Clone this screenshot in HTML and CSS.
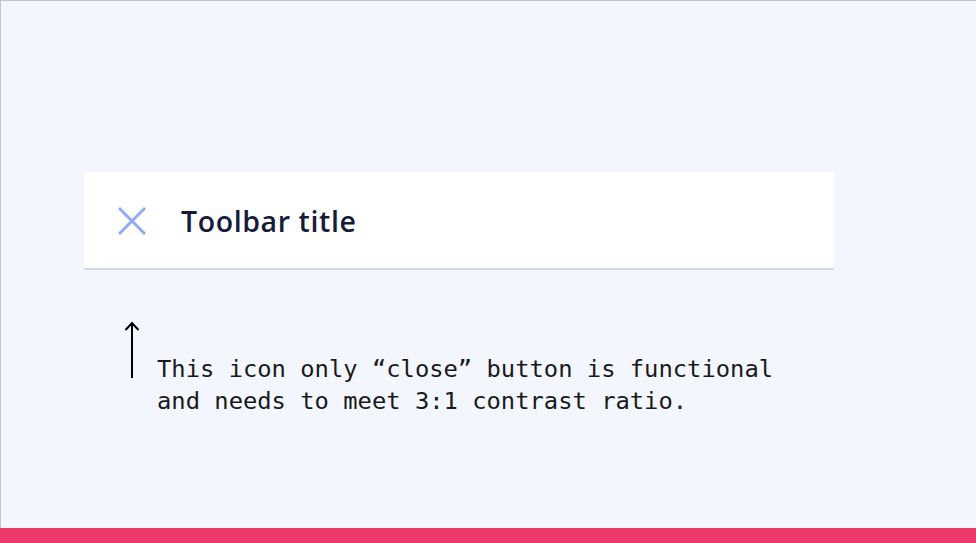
FILE: index.html
```html
<!DOCTYPE html>
<html>
<head>
<meta charset="utf-8">
<link rel="stylesheet" href="styles.css">
</head>
<body>
<div class="frame">
  <div class="stage">
    <div class="toolbar">
      <svg class="close" width="28" height="28" viewBox="0 0 28 28"><path d="M1 1 L27 27 M27 1 L1 27" stroke="#91abf5" stroke-width="3" fill="none"/></svg>
      <span class="title">Toolbar title</span>
    </div>
    <div class="note">
      <svg class="arrow" width="16" height="58" viewBox="0 0 16 58"><path d="M8 57 V2 M1.5 9 L8 2 L14.5 9" stroke="#000" stroke-width="2" fill="none"/></svg>
      <p class="note-text">This icon only “close” button is functional<br>and needs to meet 3:1 contrast ratio.</p>
    </div>
  </div>
  <div class="bar"></div>
</div>
</body>
</html>
```
FILE: styles.css
```css
html, body { margin: 0; padding: 0; }
body { width: 976px; height: 543px; overflow: hidden; background: #f3f6fe; }
.frame {
  width: 976px; height: 543px; box-sizing: border-box;
  border-top: 1px solid #c4c4c8; border-left: 1px solid #c4c4c8;
  display: flex; flex-direction: column; background: #f3f6fe;
}
.stage { flex: 1; padding: 171px 0 0 83px; }
.toolbar {
  width: 750px; height: 96px; background: #fff;
  border-bottom: 2px solid #d5d8e6;
  display: flex; align-items: center; box-sizing: content-box;
}
.close { margin-left: 34px; margin-top: 1px; }
.title {
  margin-left: 35px; margin-top: 2px;
  font-family: "Open Sans", sans-serif; font-weight: 600; font-size: 28.5px;
  color: #141c3a; letter-spacing: 0.6px;
}
.note { display: flex; margin-top: 49px; margin-left: 40px; }
.arrow { margin-top: 2px; }
.note-text {
  margin: 34px 0 0 17px;
  font-family: "DejaVu Sans Mono", monospace; font-size: 23.8px; line-height: 32px;
  color: #1a1a1a; letter-spacing: 0;
}
.bar { height: 15px; background: #ee3a6b; margin-left: -1px; }
```
